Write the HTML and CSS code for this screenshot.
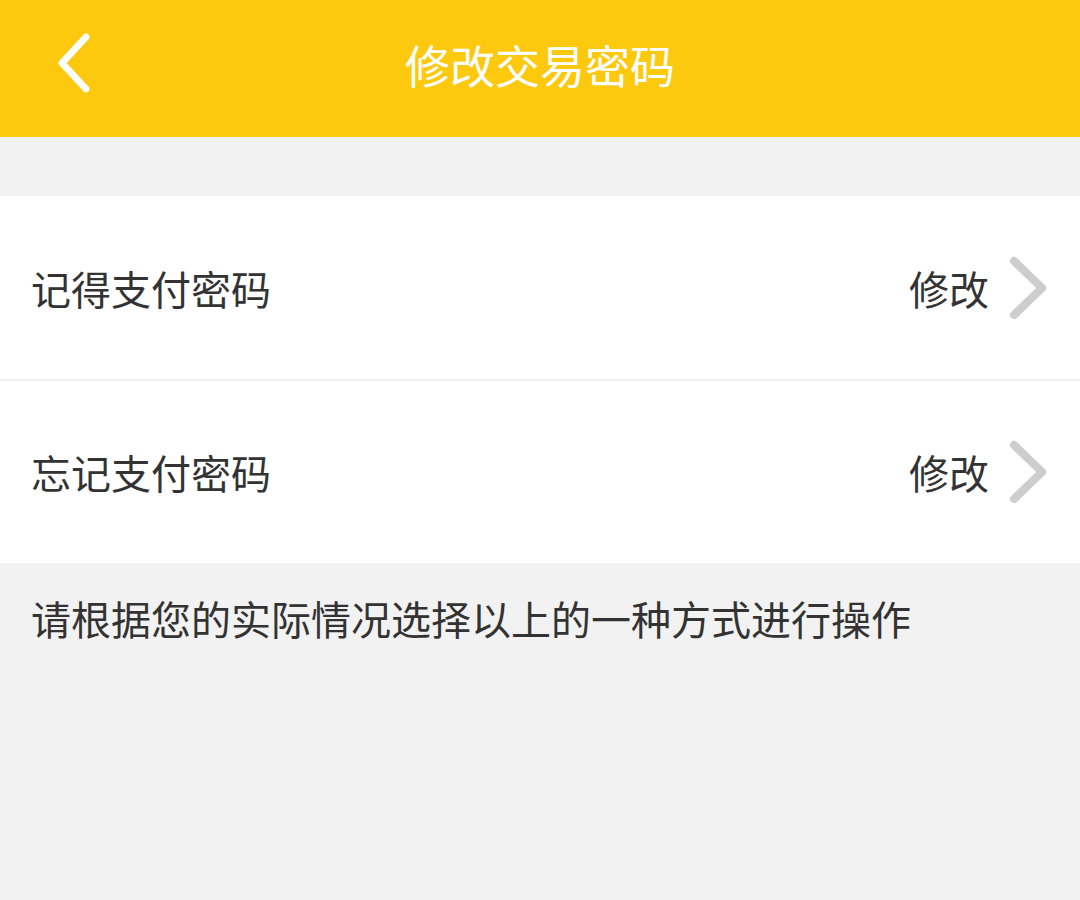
FILE: index.html
```html
<!DOCTYPE html>
<html lang="zh-CN">
<head>
<meta charset="utf-8">
<title>修改交易密码</title>
<link rel="stylesheet" href="styles.css">
</head>
<body>
<header class="topbar">
  <span class="back">
    <svg width="40" height="60" viewBox="0 0 40 60"><path d="M32 4 L8 30 L32 56" fill="none" stroke="#fff" stroke-width="7" stroke-linecap="round" stroke-linejoin="round"/></svg>
  </span>
  <h1 class="title">修改交易密码</h1>
</header>
<main class="content">
  <section class="list">
    <div class="row">
      <span class="label">记得支付密码</span>
      <span class="action">修改
        <svg class="chev" width="44" height="66" viewBox="0 0 44 66"><path d="M8 6 L36 33 L8 60" fill="none" stroke="#cdcdcd" stroke-width="8" stroke-linecap="round" stroke-linejoin="round"/></svg>
      </span>
    </div>
    <div class="row">
      <span class="label">忘记支付密码</span>
      <span class="action">修改
        <svg class="chev" width="44" height="66" viewBox="0 0 44 66"><path d="M8 6 L36 33 L8 60" fill="none" stroke="#cdcdcd" stroke-width="8" stroke-linecap="round" stroke-linejoin="round"/></svg>
      </span>
    </div>
  </section>
  <p class="hint">请根据您的实际情况选择以上的一种方式进行操作</p>
</main>
</body>
</html>
```

FILE: styles.css
```css
* { box-sizing: border-box; }
html, body { margin: 0; padding: 0; }
body {
  width: 1080px;
  height: 900px;
  background: #f2f2f2;
  font-family: "Noto Sans CJK SC", "Noto Sans", sans-serif;
  color: #333;
  overflow: hidden;
}
.topbar {
  height: 137px;
  background: #fdc90f;
  display: flex;
  align-items: center;
  justify-content: center;
  position: relative;
}
.back {
  position: absolute;
  left: 54px;
  top: 33px;
  display: flex;
}
.title {
  margin: 0;
  font-size: 45px;
  font-weight: 400;
  color: #fff;
  line-height: 1;
  position: relative;
  top: -4px;
  left: 0;
}
.content {
  padding-top: 59px;
}
.list {
  background: #fff;
  display: flex;
  flex-direction: column;
}
.row {
  height: 183px;
  display: flex;
  align-items: center;
  justify-content: space-between;
  padding: 0 30px 0 31px;
}
.row + .row {
  border-top: 2px solid #efefef;
  height: 184px;
}
.label, .action {
  font-size: 40px;
  line-height: 1;
  color: #333;
}
.action {
  display: flex;
  align-items: center;
  gap: 17px;
}
.chev { display: block; }
.hint {
  margin: 0;
  padding: 27px 0 0 31px;
  font-size: 40px;
  line-height: 1.4;
  color: #333;
}
```
